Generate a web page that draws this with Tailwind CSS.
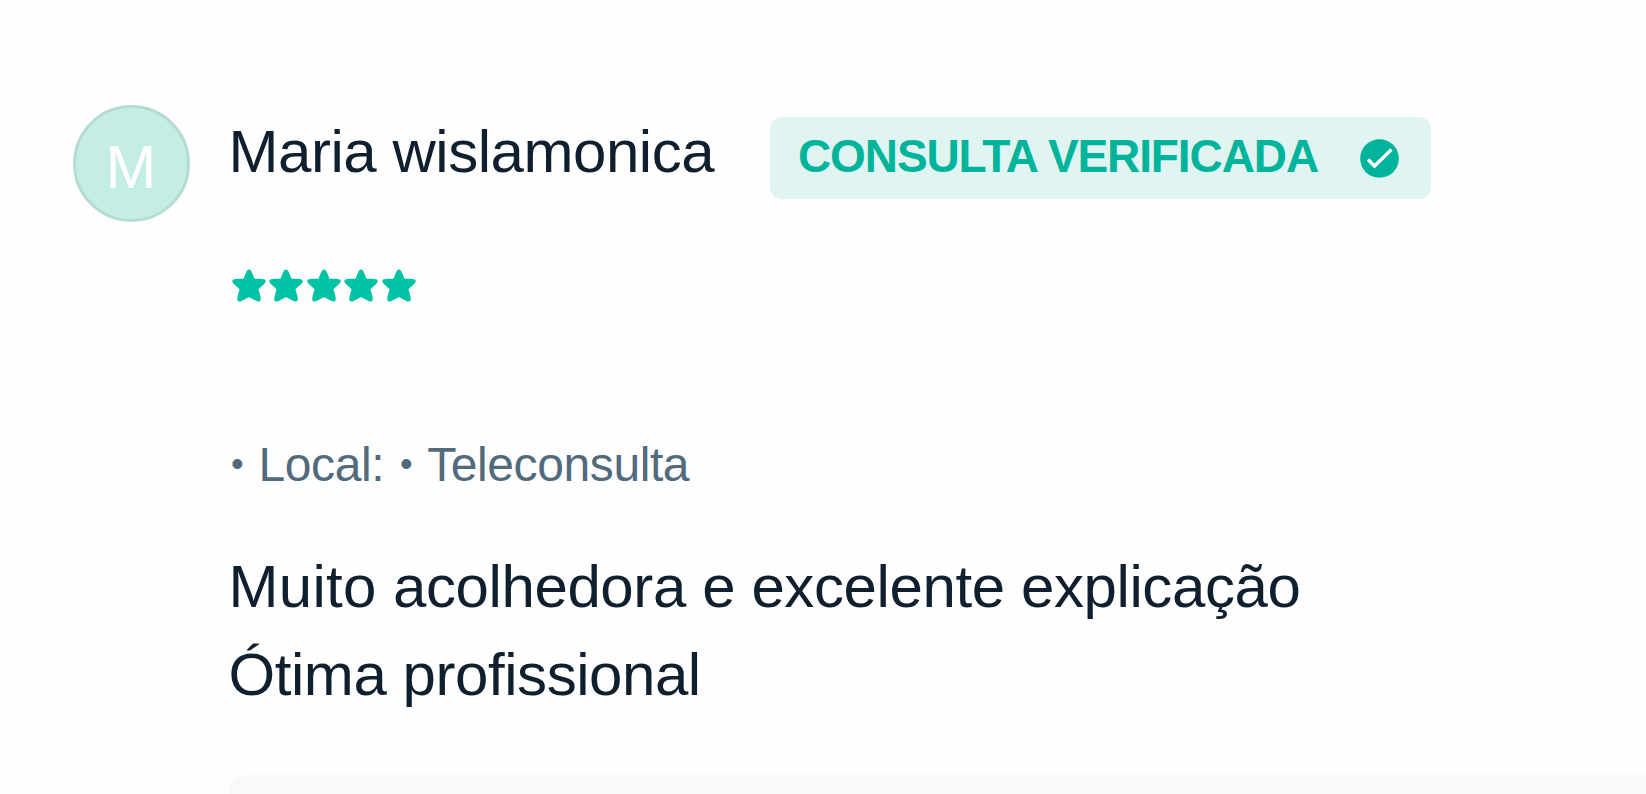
<!DOCTYPE html>
<html lang="pt-BR">

<head>
    <meta charset="UTF-8">
    <meta name="viewport" content="width=device-width, initial-scale=1.0">
    <title>Opinião</title>
    <script src="https://cdn.jsdelivr.net/npm/@tailwindcss/browser@4"></script>
</head>

<body class="bg-[#fefefe] h-screen overflow-hidden font-['Liberation_Sans',Arial,sans-serif] text-[#0f1f2e]">
    <svg class="hidden">
        <symbol id="star" viewBox="0 0 34 34">
            <path d="M17 2.8 C18 2.8 19.5 9.5 21.3 11.8 C24 12.6 31 11.2 31.5 12.2 C31.2 13.6 25 17.8 24.2 19.8 C24.2 22.3 27.5 29 26.5 30.4 C24.5 30.4 19.5 26 17 26 C14.5 26 9.5 30.4 7.5 30.4 C6.5 29 9.8 22.3 9.8 19.8 C9 17.8 2.8 13.6 2.5 12.2 C3 11.2 10 12.6 12.7 11.8 C14.5 9.5 16 2.8 17 2.8 Z" fill="currentColor" stroke="currentColor" stroke-width="4.4" stroke-linejoin="round" />
        </symbol>
    </svg>
    <div class="flex h-full pl-[72.5px] pt-[105px]">
        <div class="w-[117px] h-[117px] shrink-0 rounded-full bg-[#c4ede3] border-3 border-[#b4dcd2] flex items-center justify-center text-white text-[61px] leading-none">
            <span class="pt-[7px]">M</span>
        </div>
        <div class="flex-1 ml-[39px] pt-[3px]">
            <div class="flex items-start">
                <h4 class="text-[60px] leading-[88px] tracking-[-0.46px] whitespace-nowrap w-[541.5px]">Maria wislamonica</h4>
                <div class="mt-[9px] h-[82px] w-[661px] rounded-xl bg-[#e0f5f2] text-[#00b39b] flex items-start pl-[28px] pr-8">
                    <span class="mt-[6px] text-[46px] leading-[66px] tracking-[-1.1px] font-bold whitespace-nowrap">CONSULTA VERIFICADA</span>
                    <svg class="w-[39px] h-[39px] ml-auto mt-[21.5px]" viewBox="0 0 39 39" fill="none">
                        <circle cx="19.5" cy="19.5" r="19.3" fill="currentColor" />
                        <path d="M8 20.5 L14.5 27 L31.5 10.5" stroke="white" stroke-width="3.4" />
                    </svg>
                </div>
            </div>
            <div class="flex gap-[3.6px] mt-[70px] pl-[3px] text-[#00c3a5]">
                <svg class="w-[34px] h-[34px]"><use href="#star" /></svg>
                <svg class="w-[34px] h-[34px]"><use href="#star" /></svg>
                <svg class="w-[34px] h-[34px]"><use href="#star" /></svg>
                <svg class="w-[34px] h-[34px]"><use href="#star" /></svg>
                <svg class="w-[34px] h-[34px]"><use href="#star" /></svg>
            </div>
            <p class="mt-[127px] h-[70px] text-[48px] leading-[70px] tracking-[-0.4px] text-[#516a7c] whitespace-nowrap"><span class="inline-block w-[17px] text-center text-[36px] leading-none relative -top-[5px]">•</span> Local: <span class="inline-block w-[18px] text-center text-[36px] leading-none relative -top-[5px]">•</span> Teleconsulta</p>
            <p class="mt-[43px] text-[60px] leading-[88px] whitespace-nowrap"><span class="tracking-[-0.4px]"><span class="tracking-[0.3px]">Muito</span> acolhedora e excelente explicação</span><br><span class="tracking-[-0.44px]">Ótima profissional</span></p>
            <div class="mt-14 h-[19px] rounded-tl-2xl bg-[#f7f9fa]"></div>
        </div>
    </div>
</body>

</html>
